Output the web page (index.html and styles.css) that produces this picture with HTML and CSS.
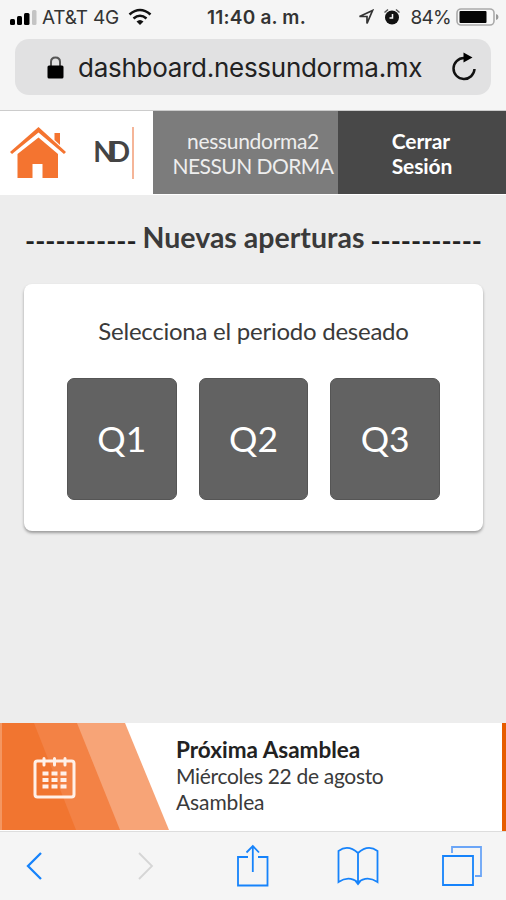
FILE: index.html
```html
<!DOCTYPE html>
<html lang="es">
<head>
  <meta charset="utf-8">
  <title>Nuevas aperturas</title>
  <link rel="stylesheet" href="styles.css">
</head>
<body>
  <div class="browser-top">
    <div class="status-bar">
      <div class="status-left">
        <svg class="signal" width="27" height="16" viewBox="0 0 27 16">
          <rect x="0" y="10" width="5" height="6" rx="1.5"/>
          <rect x="7" y="7" width="5" height="9" rx="1.5"/>
          <rect x="14" y="4" width="5.500" height="12" rx="1.5"/>
          <rect x="22" y="1" width="4.500" height="15" rx="1.5" fill="#c4c4c4"/>
        </svg>
        <span class="carrier">AT&amp;T 4G</span>
        <svg class="wifi" width="24" height="18" viewBox="0 0 24 18" fill="none" stroke="#111" stroke-width="2.600">
          <path d="M1.500 6.500Q12-2.500 22.500 6.500M5.500 10.500Q12 5 18.500 10.500"/>
          <path d="M8.500 13.500Q12 10.500 15.500 13.500L12 17Z" fill="#111" stroke="none"/>
        </svg>
      </div>
      <span class="clock">11:40 a. m.</span>
      <div class="status-right">
        <svg width="16" height="16" viewBox="0 0 16 16" fill="none" stroke="#333" stroke-width="1.700">
          <path d="M1.500 7.500L14.500 1.500L9 14.500V7.500Z"/>
        </svg>
        <svg class="alarm" width="18" height="18" viewBox="0 0 18 18">
          <circle cx="9" cy="9.500" r="7" fill="#111"/>
          <path d="M1.500 4.500L5 1.500M16.500 4.500L13 1.500" stroke="#555" stroke-width="1.500"/>
          <path d="M9.500 6V10H6.500" fill="none" stroke="#f5f5f5" stroke-width="1.500"/>
        </svg>
        <span class="percent">84%</span>
        <svg class="battery" width="43" height="18" viewBox="0 0 43 18">
          <rect x="1" y="1" width="37" height="16" rx="4" fill="#f8f8f8" stroke="#aaa" stroke-width="1.600"/>
          <rect x="3.500" y="3" width="27" height="12" rx="1" fill="#050505"/>
          <path d="M40 6Q42.500 6.500 42.500 9T40 12Z" fill="#999"/>
        </svg>
      </div>
    </div>
    <div class="address-bar">
      <svg class="lock" width="17" height="23" viewBox="0 0 17 23">
        <path d="M4 10V6Q4 1.500 8.500 1.500T13 6V10" fill="none" stroke="#555" stroke-width="2"/>
        <rect x="0.500" y="9.500" width="16" height="13" rx="1.500"/>
      </svg>
      <span class="url">dashboard.nessundorma.mx</span>
      <svg class="reload" width="26" height="30" viewBox="0 0 26 30">
        <path d="M13 6A10.500 10.500 0 1 0 23.500 17" fill="none" stroke="#111" stroke-width="2.500"/>
        <path d="M12.500 0.500V10.500L21.500 5.500Z"/>
      </svg>
    </div>
  </div>

  <header class="header">
    <div class="brand">
      <svg class="home" width="56" height="52" viewBox="0 0 56 52" fill="#f47430">
        <path d="M7.500 27L28.500 10.500L48 27V51H32.500V37H22.500V51H7.500Z"/>
        <path d="M0 25L28.500 0L56 25L54 27L28.500 5.500L2 27Z"/>
        <path d="M44.500 6H50V18L44.500 13Z"/>
      </svg>
      <span class="logo">ND</span>
    </div>
    <div class="user">nessundorma2<br><span class="user-name">NESSUN DORMA</span></div>
    <div class="logout"><span>Cerrar<br>Sesión</span></div>
  </header>

  <main class="content">
    <h1 class="title"><span class="dashes">-----------</span><span class="title-text">Nuevas aperturas</span><span class="dashes">-----------</span></h1>
    <section class="card">
      <p class="card-text">Selecciona el periodo deseado</p>
      <div class="periods">
        <div class="period">Q1</div>
        <div class="period">Q2</div>
        <div class="period">Q3</div>
      </div>
    </section>
  </main>

  <footer class="meeting">
    <svg class="meeting-art" width="170" height="107" viewBox="0 0 170 107">
      <path d="M0 0H125L169 107H0Z" fill="#f7a477"/>
      <path d="M0 0H77L120 107H0Z" fill="#f38245"/>
      <path d="M0 0H34L76 107H0Z" fill="#f17530"/>
      <path d="M0 0H2V107H0Z" fill="#f49661"/>
      <g fill="none" stroke="#fff0e8" stroke-width="3">
        <rect x="35" y="38" width="39" height="36" rx="2.500"/>
        <path d="M44 35.500V42M54.500 35.500V42M65 35.500V42" stroke-linecap="round"/>
        <path d="M42.500 50.500H66.500M42.500 57H66.500M42.500 63.500H66.500" stroke-width="4" stroke-dasharray="6 3"/>
      </g>
    </svg>
    <div class="meeting-info">
      <strong>Próxima Asamblea</strong>
      <span class="meeting-date">Miércoles 22 de agosto</span>
      <span class="meeting-kind">Asamblea</span>
    </div>
  </footer>

  <nav class="toolbar">
    <svg class="back" width="18" height="30" viewBox="0 0 18 30"><path d="M16 2L3 15L16 28" stroke-width="2.300"/></svg>
    <svg class="disabled" width="18" height="30" viewBox="0 0 18 30"><path d="M2 2L15 15L2 28"/></svg>
    <svg class="share" width="34" height="44" viewBox="0 0 34 44">
      <path d="M12 13H2V41.500H31.500V13H22M16.800 28V2M10.500 8.500L16.800 2L23 8.500"/>
    </svg>
    <svg class="book" width="42" height="42" viewBox="0 0 42 42">
      <path d="M21 8Q11-1 1.500 6V37Q12 30 21 37.500Q30 30 40.500 37V6Q31-1 21 8V38M18.500 36L21 39L23.500 36"/>
    </svg>
    <svg class="tabs" width="42" height="42" viewBox="0 0 42 42">
      <path d="M2 11H32V40H2Z"/>
      <path d="M11 8V2H40V31H34" stroke="#6aa5f7"/>
    </svg>
  </nav>
</body>
</html>
```

FILE: styles.css
```css
* {
  box-sizing: border-box;
}
body {
  margin: 0;
  height: 900px;
  display: flex;
  flex-direction: column;
  overflow: hidden;
  background-color: #ededed;
  font-family: Lato, sans-serif;
  color: #3a3a3a;
}
svg {
  display: block;
  flex: none;
}
.browser-top {
  height: 111px;
  background-color: #f5f5f5;
  border-bottom: 1px solid #ccc;
  font-family: Inter, "Liberation Sans", sans-serif;
  white-space: nowrap;
}
.status-bar {
  height: 39px;
  padding: 0 7px 5px 10px;
  display: grid;
  grid-template-columns: 1fr auto 1fr;
  align-items: center;
  font-size: 19px;
  color: #333;
}
.status-left, .status-right {
  display: flex;
  align-items: center;
}
.status-right {
  justify-content: flex-end;
}
.carrier {
  margin-left: 5px;
  letter-spacing: -0.2px;
}
.wifi {
  margin-left: 9px;
}
.clock {
  padding-left: 4px;
  font-weight: 600;
  letter-spacing: 0.2px;
}
.alarm {
  margin-left: 9px;
}
.percent {
  margin-left: 9px;
  letter-spacing: -0.7px;
}
.battery {
  margin-left: 5px;
}
.address-bar {
  height: 56px;
  margin: 0 15px;
  padding: 0 14px 0 32px;
  display: flex;
  align-items: center;
  border-radius: 14px;
  background-color: #e1e1e2;
}
.url {
  margin-left: 14px;
  font-size: 26px;
  letter-spacing: -0.28px;
  color: #222;
}
.reload {
  margin-left: auto;
}
.header {
  height: 84px;
  display: flex;
  background-color: #fff;
  line-height: 25px;
  font-size: 21px;
}
.brand {
  width: 153px;
  padding: 0 19px 0 10px;
  display: flex;
  align-items: center;
  justify-content: space-between;
}
.logo {
  height: 52px;
  line-height: 48px;
  padding-right: 8px;
  border-right: 2px solid #f5b598;
  font-weight: bold;
  font-size: 28px;
  letter-spacing: -6px;
  color: #444;
}
.user {
  width: 185px;
  height: 83px;
  padding: 17px 4px 0 19px;
  background-color: #7c7c7c;
  color: #eee;
  letter-spacing: -0.3px;
  text-align: center;
  white-space: nowrap;
}
.user-name {
  letter-spacing: -0.55px;
}
.logout {
  flex: 1;
  height: 83px;
  padding-top: 17px;
  display: flex;
  justify-content: center;
  background-color: #484848;
  color: #fff;
  font-weight: bold;
  letter-spacing: -0.1px;
}
.content {
  flex: 1;
  padding: 0 23px 0 24px;
}
.title {
  height: 89px;
  margin: 0;
  padding: 24px 1px 0;
  display: flex;
  justify-content: space-between;
  line-height: 36px;
  font-size: 28.5px;
  font-weight: bold;
  white-space: nowrap;
}
.dashes {
  padding-top: 4px;
  font-size: 27.2px;
  color: #222;
}
.card {
  height: 247px;
  padding: 31px 43px 0;
  border-radius: 8px;
  background-color: #fff;
  box-shadow: 0 2px 3px rgba(0, 0, 0, 0.35);
}
.card-text {
  margin: 0 0 32px;
  line-height: 31px;
  font-size: 24px;
  letter-spacing: -0.25px;
  text-align: center;
  white-space: nowrap;
}
.periods {
  display: flex;
  gap: 22px;
}
.period {
  flex: 1;
  height: 122px;
  padding-bottom: 1px;
  display: flex;
  align-items: center;
  justify-content: center;
  border: 1px solid #555;
  border-radius: 7px;
  background-color: #626262;
  color: #fff;
  font-size: 35.5px;
}
.meeting {
  height: 108px;
  display: flex;
  background-color: #fff;
  border-right: 4px solid #e65c00;
}
.meeting-info {
  padding: 14px 0 0 6px;
  display: flex;
  flex-direction: column;
  line-height: 26px;
  font-size: 21px;
  white-space: nowrap;
}
.meeting-info strong {
  font-size: 22.5px;
  color: #222;
}
.meeting-date {
  letter-spacing: -0.32px;
}
.meeting-kind {
  letter-spacing: -0.1px;
}
.toolbar {
  height: 69px;
  padding: 0 23px 0 25px;
  display: flex;
  align-items: center;
  background-color: #f5f5f5;
  border-top: 1px solid #ddd;
}
.toolbar svg {
  fill: none;
  stroke: #1683fb;
  stroke-width: 1.8;
}
.toolbar .disabled {
  margin-left: 94px;
  stroke: #d5d5d5;
}
.share {
  margin-left: 81px;
}
.book {
  margin-left: 67px;
}
.tabs {
  margin-left: auto;
}
```
